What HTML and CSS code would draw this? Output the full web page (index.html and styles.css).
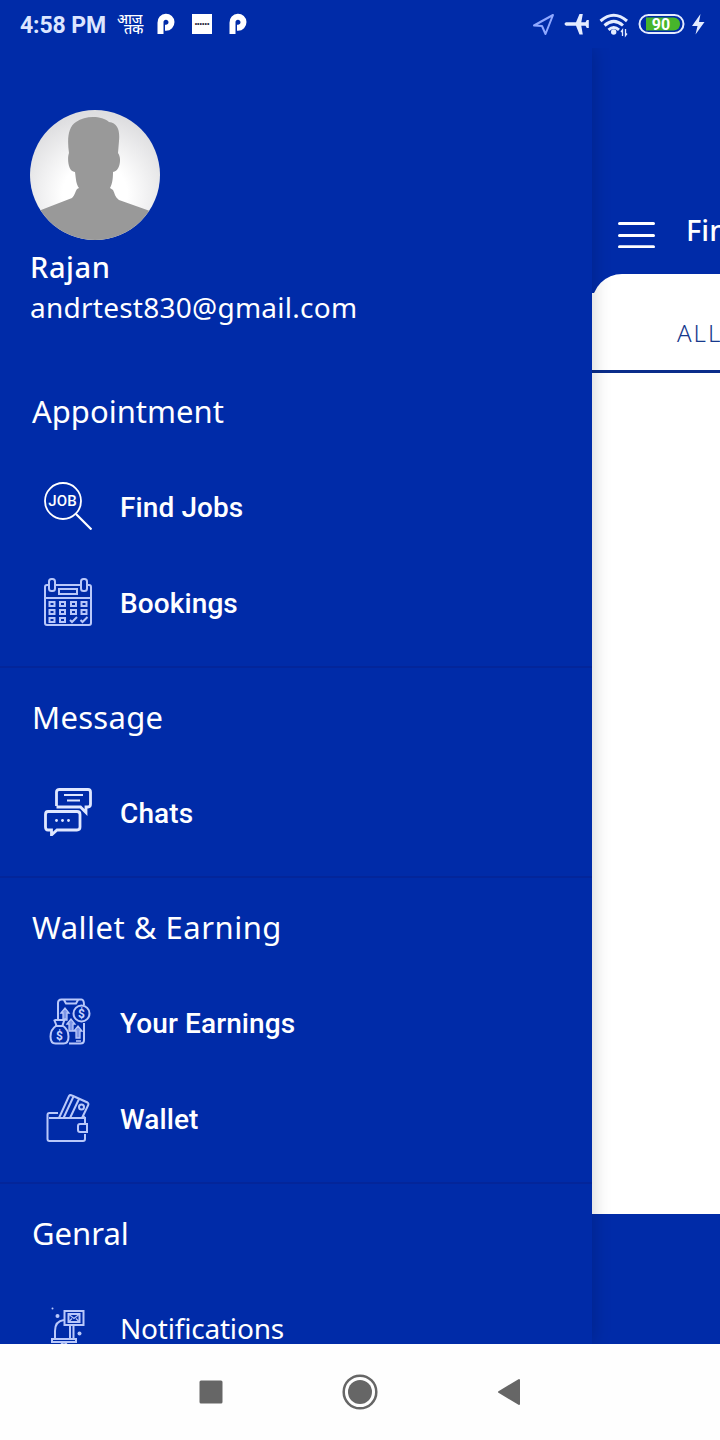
FILE: index.html
```
<!DOCTYPE html>
<html lang="en">
<head>
  <meta charset="UTF-8">
  <title>Menu</title>
  <link rel="stylesheet" href="styles.css">
</head>
<body>
  <div class="phone">
    <header class="status-bar">
      <div class="status-left">
        <span class="clock">4:58 PM</span>
        <span class="news-icon" lang="hi"><span>आज</span><span>तक</span></span>
        <svg class="p-icon" width="18" height="22" viewBox="0 0 18 22"><path d="M3.500 21V9.500a5.500 5.500 0 1 1 5.500 5.200H8" fill="none" stroke="#fff" stroke-width="6"/></svg>
        <span class="app-icon">••••••</span>
        <svg class="p-icon" width="18" height="22" viewBox="0 0 18 22"><path d="M3.500 21V9.500a5.500 5.500 0 1 1 5.500 5.200H8" fill="none" stroke="#fff" stroke-width="6"/></svg>
      </div>
      <svg class="status-right" width="178" height="30" viewBox="530 9 178 30">
        <path d="M534 25.500 553 15l-7.500 19-3.500-8z" fill="none" stroke="#8fa8ff" stroke-width="2" stroke-linejoin="round"/>
        <path d="M566 22.300h10L579.500 14h3.300l-1.500 8.300h4.200l1.300-2.300h2v8h-2l-1.300-2.300h-4.200l1.500 8.800h-3.300L576 25.700H566q-3-1.700 0-3.400z" fill="#e4ecff"/>
        <g fill="none" stroke="#e4ecff" stroke-width="3">
          <path d="M600.500 21q13.200-11.500 26.500 0"/>
          <path d="M604.500 25.500q9.300-8.200 18.500 0"/>
          <path d="M608.500 29.800q5.300-4.500 10.500 0"/>
        </g>
        <circle cx="613.700" cy="32" r="2.700" fill="#e4ecff"/>
        <path d="M622.500 36v-6l-1.500 2M625.500 29v6.500l1.500-2" fill="none" stroke="#e4ecff" stroke-width="1.300"/>
        <rect x="639.500" y="15" width="44" height="18" rx="9" fill="none" stroke="#e4ecff" stroke-width="2"/>
        <path d="M646 17.500h28q6 1 6 6.500t-6 6.500h-28z" fill="#47b52b"/>
        <text x="661" y="30" text-anchor="middle" class="battery-text">90</text>
        <path d="M700.500 14 692 26h5.500l-2 8.500L704.500 22H699z" fill="#e4ecff"/>
      </svg>
    </header>

    <main class="main">
      <aside class="drawer">
        <div class="profile">
          <svg class="avatar" width="130" height="130" viewBox="0 0 130 130">
            <defs>
              <radialGradient id="glow" cx="50%" cy="65%" r="62%">
                <stop offset="0.400" stop-color="#fff"/>
                <stop offset="1" stop-color="#dedee0"/>
              </radialGradient>
              <clipPath id="round"><circle cx="65" cy="65" r="65"/></clipPath>
            </defs>
            <g clip-path="url(#round)">
              <rect width="130" height="130" fill="url(#glow)"/>
              <path fill="#999" d="M39 43C37 29 38 17 46 12c10-7 26-6 33 0 9 1 11 9 10 19l-1 12c4 5 2 18-5 19 0 8-1 12-3 16l3 2c2 4 2 7 6 10l31 11v30H0v-30l11-1 31-12c3-3 3-6 5-9l2-1c-3-4-3-9-4-16-7 0-8-14-6-19z"/>
            </g>
          </svg>
          <div class="user-name">Rajan</div>
          <div class="user-email">andrtest830@gmail.com</div>
        </div>

        <section class="menu-group first">
          <h2>Appointment</h2>
          <a class="menu-item">
            <svg class="icon" viewBox="0 0 48 48">
              <circle cx="19" cy="19" r="18"/>
              <path d="M32 32 47.500 47.500" stroke-width="2.200"/>
              <text x="18.500" y="23.500" text-anchor="middle" class="job-text">JOB</text>
            </svg>
            <span>Find Jobs</span>
          </a>
          <a class="menu-item">
            <svg class="icon soft" viewBox="0 0 48 48">
              <path d="M5 7H3Q1 7 1 9v36q0 2 2 2h42q2 0 2-2V9q0-2-2-2h-2M11 7h26M1 20h46"/>
              <rect x="5" y="1" width="6" height="12" rx="2.500"/>
              <rect x="37" y="1" width="6" height="12" rx="2.500"/>
              <rect x="15" y="11" width="18" height="5"/>
              <g>
                <rect x="5.500" y="24" width="5" height="4"/><rect x="16" y="24" width="5" height="4"/><rect x="27" y="24" width="5" height="4"/><rect x="37.500" y="24" width="5" height="4"/>
                <rect x="5.500" y="32" width="5" height="4"/><rect x="16" y="32" width="5" height="4"/><rect x="27" y="32" width="5" height="4"/><rect x="37.500" y="32" width="5" height="4"/>
                <rect x="5.500" y="40" width="5" height="4"/><rect x="16" y="40" width="5" height="4"/>
                <path d="m26 42 2 2 5-5M36.500 42l2 2 5-5"/>
              </g>
            </svg>
            <span>Bookings</span>
          </a>
        </section>

        <section class="menu-group">
          <h2 class="t-message">Message</h2>
          <a class="menu-item">
            <svg class="icon bold" viewBox="0 0 48 48">
              <path d="M12.500 18V4q0-2.500 3-2.500H44q2.500 0 2.500 2.500v12q0 3-2.500 3h-2v5.500L36.500 19H12.500"/>
              <path d="M20 7h19M23 12.500h13" stroke-width="2"/>
              <path d="M4 23.500h29q3 0 3 3V39q0 3-3 3H13l-5.500 5v-5H4q-2.500 0-2.500-3V26.500q0-3 2.500-3z"/>
              <g fill="#dfe7ff" stroke="none"><circle cx="12.500" cy="32.500" r="1.400"/><circle cx="18.500" cy="32.500" r="1.400"/><circle cx="24.500" cy="32.500" r="1.400"/></g>
            </svg>
            <span>Chats</span>
          </a>
        </section>

        <section class="menu-group">
          <h2 class="t-wallet">Wallet &amp; Earning</h2>
          <a class="menu-item">
            <svg class="icon soft earnings" viewBox="0 0 48 48">
              <path d="M14 22V5q0-3.500 3.500-3.500h20Q40 1.500 40 7M40 25v17q0 3.500-3.500 3.500H25M20 2l2 3.500h10L34 2"/>
              <circle cx="37.500" cy="15.500" r="8"/>
              <text x="37.500" y="20" text-anchor="middle" class="coin-text">$</text>
              <path d="m17 15 4-5 4 5h-2v7h-4v-7zM23 26l4-5 4 5h-2v7h-4v-7zM30 33l4-5 4 5h-2v7h-4v-7zM32 43h5" fill="#7f96e6" stroke-width="1.300"/>
              <path d="M11.500 22h7l2-0.500-2 6q6 4 6 11 0 7-5 7h-8q-5 0-5-7 0-7 6-11l-2-5zM11 28h8"/>
              <text x="15.500" y="42" text-anchor="middle" class="coin-text">$</text>
            </svg>
            <span>Your Earnings</span>
          </a>
          <a class="menu-item">
            <svg class="icon soft" viewBox="0 0 48 48">
              <path d="M14 19H5.500Q3.500 19 3.500 21v24q0 2 2 2H39q2 0 2-2v-5M41 30v-6H5M41 24l-2-2"/>
              <path d="M41 30h-5q-2 0-2 2v4q0 2 2 2h7V30z"/>
              <path d="m15 24 10-22q1-1.500 3-.500l15.500 7q1.500 1 .5 3L38 24M19.500 24 29.500 2.500M26 24l9-19"/>
              <circle cx="37.500" cy="13" r="2.500"/>
            </svg>
            <span>Wallet</span>
          </a>
        </section>

        <section class="menu-group">
          <h2>Genral</h2>
          <a class="menu-item light">
            <svg class="icon soft" viewBox="0 0 48 48">
              <rect x="20.500" y="7" width="19" height="14"/>
              <rect x="24.500" y="10" width="11" height="8"/>
              <path d="m25 10.500 5 4 5-4M25 17.500l3-3M35 17.500l-3-3" stroke-width="1.200"/>
              <path d="M26 21v14M29.500 21v14M20 16q-9 1-9 11v7M8 35h24v3H8zM17 38q3 5 6 0"/>
              <g fill="#b9c8fa" stroke="none"><circle cx="13.500" cy="12" r="2"/><circle cx="35.500" cy="29.500" r="2"/><circle cx="8.500" cy="4.500" r="1"/></g>
            </svg>
            <span>Notifications</span>
          </a>
        </section>
      </aside>

      <div class="page">
        <div class="toolbar">
          <svg class="burger" width="38" height="26" viewBox="0 0 38 26"><path d="M1.500 1.500h34M1.500 13.500h34M1.500 24.700h34" stroke="#fff" stroke-width="3" stroke-linecap="round"/></svg>
          <span class="page-title">Find Jobs</span>
        </div>
        <div class="content">
          <div class="tabs"><span>ALL</span></div>
        </div>
      </div>
    </main>

    <nav class="nav-bar">
      <svg width="24" height="24" viewBox="0 0 24 24"><rect x=".5" y=".5" width="23" height="23" rx="1.500" fill="#666"/></svg>
      <svg width="36" height="36" viewBox="0 0 36 36"><circle cx="18" cy="18" r="16.300" fill="none" stroke="#666" stroke-width="2.500"/><circle cx="18" cy="18" r="12" fill="#666"/></svg>
      <svg width="24" height="28" viewBox="0 0 24 28"><path d="M2 14 22 2v24z" fill="#666" stroke="#666" stroke-width="2" stroke-linejoin="round"/></svg>
    </nav>
  </div>
</body>
</html>
```

FILE: styles.css
```
* {
  box-sizing: border-box;
}
body {
  margin: 0;
  background: #002ba8;
  color: #fff;
  font-family: "Noto Sans", sans-serif;
}
.phone {
  width: 720px;
  height: 1440px;
  display: flex;
  flex-direction: column;
  overflow: hidden;
}

/* status bar */
.status-bar {
  height: 48px;
  flex: none;
  display: flex;
  justify-content: space-between;
  align-items: center;
  padding: 0 12px 0 20px;
}
.status-left {
  display: flex;
  align-items: center;
}
.clock {
  width: 97px;
  padding-top: 3px;
  color: #dce5ff;
  font: 700 23px/45px Roboto, sans-serif;
  letter-spacing: -0.1px;
  white-space: nowrap;
}
.news-icon {
  width: 26px;
  height: 20px;
  margin-right: 14px;
  display: flex;
  flex-direction: column;
  font-size: 14px;
  font-weight: 500;
  line-height: 10px;
}
.news-icon span + span {
  padding-left: 7px;
}
.app-icon {
  width: 20px;
  height: 20px;
  margin: 0 17px;
  background: #fff;
  color: #223;
  font: 7px/20px "Liberation Sans", sans-serif;
  text-align: center;
}
.battery-text {
  fill: #fff;
  font: 700 16px Roboto, sans-serif;
}

/* drawer */
.main {
  height: 1296px;
  flex: none;
  display: flex;
  overflow: hidden;
}
.drawer {
  width: 592px;
  flex: none;
  background: #002ba8;
  position: relative;
  z-index: 2;
  box-shadow: 0 0 18px rgba(0, 0, 0, 0.2);
}
.profile {
  height: 312px;
  padding: 62px 30px 0;
}
.avatar {
  display: block;
}
.user-name {
  margin-top: 7px;
  font-size: 29px;
  font-weight: 500;
  line-height: 40px;
  letter-spacing: 0.6px;
}
.user-email {
  font-size: 28px;
  line-height: 40px;
  letter-spacing: 0.25px;
}
.menu-group {
  padding-bottom: 16px;
  border-top: 2px solid #03259a;
}
.menu-group.first {
  border-top-color: transparent;
}
.menu-group h2 {
  height: 96px;
  margin: 0;
  padding-left: 32px;
  font-size: 31px;
  font-weight: 400;
  line-height: 98px;
}
.menu-group .t-message {
  letter-spacing: 0.3px;
}
.menu-group .t-wallet {
  letter-spacing: 0.5px;
}
.menu-item {
  height: 96px;
  padding-left: 44px;
  display: flex;
  align-items: center;
  gap: 28px;
  font: 500 28px Roboto, sans-serif;
  letter-spacing: 0.1px;
}
.menu-item span {
  padding-top: 2px;
}
.menu-item.light {
  font: 400 28px "Noto Sans", sans-serif;
  letter-spacing: -0.2px;
}
.menu-item.light span {
  padding-top: 0;
}
.icon {
  width: 48px;
  height: 48px;
  fill: none;
  stroke: #fff;
  stroke-width: 1.8;
}
.icon.soft {
  stroke: #b9c8fa;
  stroke-width: 2;
}
.icon.bold {
  stroke: #dfe7ff;
  stroke-width: 2.8;
}
.icon text {
  fill: #fff;
  stroke: none;
}
.job-text {
  font: 500 15px Roboto, sans-serif;
}
.icon .coin-text {
  fill: #c9d5ff;
  font: 700 12px Roboto, sans-serif;
}

/* page behind the drawer */
.page {
  width: 128px;
  flex: none;
  overflow: hidden;
}
.toolbar {
  height: 226px;
  padding: 0 0 26px 26px;
  display: flex;
  align-items: flex-end;
  gap: 30px;
}
.burger {
  flex: none;
}
.page-title {
  font-size: 29px;
  font-weight: 500;
  line-height: 36px;
  white-space: nowrap;
}
.content {
  height: 940px;
  background: linear-gradient(#002ba8 19px, #fff 19px);
}
.tabs {
  height: 99px;
  padding: 12px 0 0 85px;
  background: #fff;
  border-bottom: 3px solid #0a2d8a;
  border-top-left-radius: 30px;
  color: #16398c;
  font-size: 24px;
  font-weight: 300;
  line-height: 94px;
  letter-spacing: 2px;
}

/* system buttons */
.nav-bar {
  height: 96px;
  flex: none;
  display: flex;
  justify-content: center;
  align-items: center;
  gap: 119px;
  padding-right: 1px;
  background: #fefefe;
}
```
